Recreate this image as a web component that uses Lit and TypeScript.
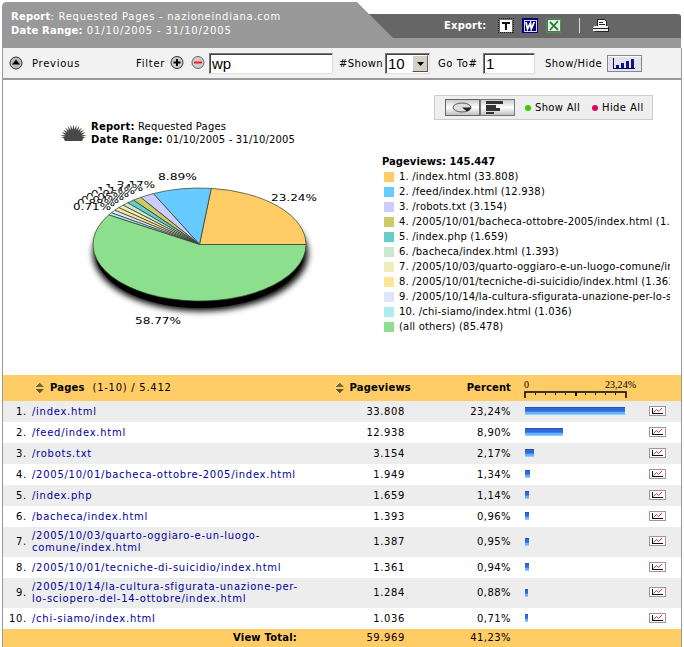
import { LitElement, html, svg, css } from "lit";
import { customElement } from "lit/decorators.js";

interface Row {
  label: string[];
  views: string;
  percent: string;
  bar: number;
  tall?: boolean;
}

const rows: Row[] = [
  { label: ["/index.html"], views: "33.808", percent: "23,24%", bar: 100 },
  { label: ["/feed/index.html"], views: "12.938", percent: "8,90%", bar: 38 },
  { label: ["/robots.txt"], views: "3.154", percent: "2,17%", bar: 9 },
  { label: ["/2005/10/01/bacheca-ottobre-2005/index.html"], views: "1.949", percent: "1,34%", bar: 5 },
  { label: ["/index.php"], views: "1.659", percent: "1,14%", bar: 4 },
  { label: ["/bacheca/index.html"], views: "1.393", percent: "0,96%", bar: 4 },
  { label: ["/2005/10/03/quarto-oggiaro-e-un-luogo-", "comune/index.html"], views: "1.387", percent: "0,95%", bar: 4, tall: true },
  { label: ["/2005/10/01/tecniche-di-suicidio/index.html"], views: "1.361", percent: "0,94%", bar: 4 },
  { label: ["/2005/10/14/la-cultura-sfigurata-unazione-per-", "lo-sciopero-del-14-ottobre/index.html"], views: "1.284", percent: "0,88%", bar: 3, tall: true },
  { label: ["/chi-siamo/index.html"], views: "1.036", percent: "0,71%", bar: 3 },
];

const legend: [string, string][] = [
  ["#ffcc66", "1. /index.html (33.808)"],
  ["#66ccff", "2. /feed/index.html (12.938)"],
  ["#ccccff", "3. /robots.txt (3.154)"],
  ["#cccc66", "4. /2005/10/01/bacheca-ottobre-2005/index.html (1.949)"],
  ["#66cccc", "5. /index.php (1.659)"],
  ["#cce8cc", "6. /bacheca/index.html (1.393)"],
  ["#eeeebb", "7. /2005/10/03/quarto-oggiaro-e-un-luogo-comune/index.html (1.387)"],
  ["#ffe699", "8. /2005/10/01/tecniche-di-suicidio/index.html (1.361)"],
  ["#dde6ff", "9. /2005/10/14/la-cultura-sfigurata-unazione-per-lo-sciopero (1.284)"],
  ["#aaeeee", "10. /chi-siamo/index.html (1.036)"],
  ["#8cdf8c", "(all others) (85.478)"],
];

const shares = [23.24, 8.89, 2.17, 1.34, 1.14, 0.96, 0.95, 0.94, 0.88, 0.71, 58.77];

/* Outer labels: text, left edge, baseline, width */
const pieLabels: [string, number, number, number][] = [
  ["2.17%", 117, 187.5, 38],
  ["1.34%", 105, 191, 38],
  ["1.14%", 97, 194, 38],
  ["0.96%", 91, 197, 38],
  ["0.95%", 86, 200, 38],
  ["0.94%", 81, 203, 38],
  ["0.88%", 77, 206, 38],
  ["0.71%", 73, 210, 38],
  ["8.89%", 158, 179.5, 39],
  ["23.24%", 271, 200.5, 46],
  ["58.77%", 135, 323.5, 46],
];

const CX = 199.5, CY = 244.5 - 80, RX = 106.5, RY = 56.5;

function slicePath(from: number, to: number): string {
  const a = from * 2 * Math.PI, b = to * 2 * Math.PI;
  const large = to - from > 0.5 ? 1 : 0;
  return `M${CX} ${CY}L${CX + RX * Math.cos(a)} ${CY - RY * Math.sin(a)}A${RX} ${RY} 0 ${large} 0 ${CX + RX * Math.cos(b)} ${CY - RY * Math.sin(b)}Z`;
}

@customElement("report-pie")
export class ReportPie extends LitElement {
  static styles = css`
    :host { display: block; }
    svg { display: block; }
    text { font: 8px "DejaVu Sans", Verdana, sans-serif; letter-spacing: 0; fill: #000; }
  `;
  render() {
    let at = 0;
    const slices = shares.map((s, i) => {
      const from = at;
      at += s / 99.99;
      return svg`<path d=${slicePath(from, at)} fill=${legend[i][0]} stroke="#333c33" stroke-width=".7"/>`;
    });
    const spikes = Array.from({ length: 15 }, (_, i) => {
      const a = Math.PI * (i / 14);
      const b = a + Math.PI / 28;
      const p = (r: number, t: number) =>
        `${(73.5 + r * Math.cos(t)).toFixed(1)},${(58 - r * Math.sin(t)).toFixed(1)}`;
      return i < 14 ? `${p(13.5, a)} ${p(8.5, b)}` : p(13.5, a);
    }).join(" ");
    return html`<svg width="350" height="260" viewBox="0 0 350 260">
      <defs><filter id="soft" x="-20%" y="-20%" width="140%" height="150%"><feGaussianBlur stdDeviation="3.2"/></filter></defs>
      <polygon points=${spikes} fill="#484848"/>
      <path d="M63 57h21l-2 4h-17z" fill="#484848"/>
      <ellipse cx=${CX + 1} cy=${CY + 9} rx=${RX + 1} ry=${RY + 1} filter="url(#soft)"/>
      <ellipse cx=${CX} cy=${CY + 7} rx=${RX - 2} ry=${RY}/>
      ${pieLabels.map(([t, x, y, w]) => svg`
        <rect x=${x - 1} y=${y - 86.5} width=${w - 2} height="7" fill="#fff"/>
        <text transform=${`translate(${x} ${y - 80})`} textLength=${w} lengthAdjust="spacingAndGlyphs">${t}</text>`)}
      ${slices}
    </svg>`;
  }
}

const sorter = html`<svg class="sorter" width="9" height="12" viewBox="0 0 9 12">
  <path d="M4.500 .5L9 5H0z" fill="#776633"/><path d="M4.500 11.500L0 7h9z" fill="#665522"/>
  <path d="M4.500 .5L0 5M0 7l4.500 4.500" stroke="#fff" stroke-width=".7" fill="none"/></svg>`;

const trend = html`<svg class="trend" width="17" height="10" viewBox="0 0 17 10" shape-rendering="crispEdges">
  <rect x=".5" y=".5" width="16" height="9" fill="#fff" stroke="#999"/>
  <path d="M3 2h1v5h10v1H3z" fill="#111"/>
  <path d="M4.500 6.500l3-3 2 2 3.500-3.500" fill="none" stroke="#d33" shape-rendering="auto" stroke-width="1"/></svg>`;

@customElement("app-root")
export class AppRoot extends LitElement {
  static styles = css`
    :host {
      display: block; box-sizing: border-box; width: 684px; height: 647px; overflow: hidden;
      padding: 2px 2px 0 2px; background: #fff; color: #000;
      font: 10px/12px "DejaVu Sans", Verdana, sans-serif; letter-spacing: .73px;
    }
    svg { display: block; flex: none; }
    .head { position: relative; height: 46px; color: #fff; }
    .shape { position: absolute; left: 0; top: 0; }
    .title { position: absolute; left: 9px; top: 8px; line-height: 14px; white-space: nowrap; }
    .title b, .export b { letter-spacing: .2px; }
    .title div + div { letter-spacing: .85px; }
    .export { position: absolute; left: 442px; top: 15px; display: flex; align-items: center; height: 18px; }
    .export b { width: 55px; }
    .export svg { margin-left: -1px; }
    .frame { width: 678px; border: 1px solid #999; border-width: 0 1px; height: 599px; }
    .tools { display: flex; align-items: center; height: 30px; background: #f2f2f2; border-bottom: 2px solid #999; white-space: nowrap; }
    .tools span { position: relative; top: 1px; }
    .field { box-sizing: border-box; height: 21px; border: 1px solid; border-color: #777 #ddd #ddd #777; box-shadow: inset 1px 1px #444;
      background: #fff; font: 15px/20px "Liberation Sans", Arial, sans-serif; letter-spacing: 0; padding-left: 2px; display: flex; }
    .drop { margin-left: auto; width: 14px; height: 15px; margin-top: 1px; margin-right: 1px; background: #d4d0c8; border: 1px solid; border-color: #fff #555 #555 #fff; }
    .chart { position: relative; height: 295px; }
    .chart report-pie { position: absolute; left: -3px; top: 0; }
    .caption { position: absolute; left: 88px; top: 40px; line-height: 13px; letter-spacing: .16px; white-space: nowrap; }
    .switch { position: absolute; left: 431px; top: 15px; width: 219px; height: 25px; box-sizing: border-box; border: 1px solid #ccc;
      background: #eee; display: flex; align-items: center; padding-left: 10px; white-space: nowrap; }
    .dot { width: 6px; height: 6px; border-radius: 50%; margin-right: 4px; }
    .green { background: #3c0; } .red { background: #d05; }
    .legend { position: absolute; left: 379px; top: 74px; width: 288px; overflow: hidden; letter-spacing: .18px; white-space: nowrap; }
    .legend b { display: block; height: 15px; line-height: 15px; letter-spacing: .03px; }
    .item { display: flex; align-items: center; height: 15px; }
    .swatch { width: 10px; height: 10px; margin: 0 5px 0 2px; flex: none; }
    .row { display: grid; grid-template-columns: 23px 5px 294px 80px 106px 14px 120px 1fr; height: 21px; align-items: center; }
    .row > * { grid-row: 1; }
    .row.tall { height: 30px; }
    .row:nth-child(even) { background: #ededed; }
    .row.headrow, .row.total { background: #fc6; }
    .headrow { height: 26px; } .total { height: 18px; }
    .num { grid-column: 1; text-align: right; margin-right: -1px; }
    .name { grid-column: 3; color: #0000a0; padding-left: 1px; white-space: nowrap; }
    .views { grid-column: 4; text-align: right; letter-spacing: .6px; }
    .pct { grid-column: 5; text-align: right; letter-spacing: .45px; }
    .barcell { grid-column: 7; }
    .spark { grid-column: 8; padding-left: 4px; margin-top: -2px; }
    .bar { height: 8px; background: linear-gradient(#2453b8 0 12%, #3268d8 13% 50%, #3a82f2 51% 65%, #69b0ff 66% 80%, #a7d8ff); margin-bottom: 1px; }
    .cell { display: flex; align-items: center; white-space: nowrap; }
    .headrow .name { color: #000; padding-left: 4px; gap: 6px; }
    b { letter-spacing: .2px; }
    .row .cell.views { grid-column: 3 / 5; justify-content: flex-end; margin-right: -6px; gap: 6px; letter-spacing: 0; }
    .headrow .pct { letter-spacing: .1px; }
    .total .name { color: #000; text-align: right; padding-right: 28px; }
    .scale { grid-column: 7; margin-top: 1px; margin-left: -2px; }
    .scale text { font: 10px "Liberation Serif", serif; letter-spacing: 0; }
    .sp { flex: none; }
  `;
  render() {
    return html`
      <div class="head">
        <svg class="shape" width="680" height="46" viewBox="0 0 680 46">
          <path d="M340 12H676q3 0 3 3V40H340z" fill="#666"/>
          <path d="M0 46V5q0-5 5-5H355L391 36H679V46z" fill="#999"/>
        </svg>
        <div class="title"><div><b>Report</b>: Requested Pages - nazioneindiana.com</div><div><b>Date Range:</b> 01/10/2005 - 31/10/2005</div></div>
        <div class="export"><b>Export:</b>
          <svg width="130" height="18" viewBox="0 0 130 18" shape-rendering="crispEdges">
            <rect x=".5" y="1.500" width="15" height="14" fill="none" stroke="#222" stroke-dasharray="1 1"/>
            <rect x="2" y="3" width="12" height="12" fill="#fff"/><path d="M4 5h8v2H9v6H7V7H4z" fill="#111"/>
            <rect x="24" y="1" width="16" height="15" fill="#000080"/><path d="M26.500 14V3.500H38v10.500z" fill="none" stroke="#dde"/>
            <path d="M28 5l1.500 7 3-6 .8 6 3-7" fill="none" stroke="#fff" stroke-width="1.800" shape-rendering="auto"/>
            <rect x="48.500" y="1.500" width="14" height="14" fill="none" stroke="#3c9a49" stroke-width="1.500"/><rect x="50" y="3" width="12" height="11" fill="#e5f3e5"/>
            <path d="M52 5l8 8M60 4l-8 9" stroke="#248536" stroke-width="1.800" shape-rendering="auto"/>
            <path d="M81.500 1v15" stroke="#ddd"/>
            <path d="M99.500 9V2.500h7l2 2V9z" fill="#fff" stroke="#222"/><path d="M101 5.500h4M101 7.500h6" stroke="#222"/>
            <path d="M95 10l2-1h12l2 1v4H95z" fill="#eee"/><path d="M95 11.500h15M97 14.500h13.500v-5" stroke="#222" fill="none"/>
          </svg>
        </div>
      </div>
      <div class="frame">
        <div class="tools">
          <svg width="14" height="14" viewBox="0 0 14 14" style="margin-left:6px"><circle cx="7" cy="7" r="6" fill="#bbb" stroke="#333"/><path d="M7 3.500L11 8.500H3z"/></svg>
          <span class="sp" style="margin-left:9px;width:104px">Previous</span><span class="sp" style="width:31px">Filter</span>
          <svg width="40" height="14" viewBox="0 0 40 14">
            <circle cx="10" cy="6.500" r="6" fill="#ccc" stroke="#333"/><path d="M10 3v7M6.500 6.500h7" stroke="#000" stroke-width="2"/>
            <circle cx="31" cy="6.500" r="6" fill="#ccc" stroke="#666"/><path d="M27 6.500h8" stroke="#e22" stroke-width="2"/></svg>
          <div class="field" style="width:124px;margin-left:2px">wp</div>
          <span class="sp" style="margin-left:6px;width:46px;letter-spacing:.4px">#Shown</span>
          <div class="field" style="width:45px">10<div class="drop"><svg width="14" height="15" viewBox="0 0 14 15"><path d="M4 6h7L7.500 10z"/></svg></div></div>
          <span class="sp" style="margin-left:8px;width:45px;letter-spacing:.6px">Go To#</span>
          <div class="field" style="width:52px">1</div>
          <span class="sp" style="margin-left:10px;width:62px;letter-spacing:.45px">Show/Hide</span>
          <svg width="35" height="17" viewBox="0 0 35 17" shape-rendering="crispEdges"><rect x=".5" y=".5" width="34" height="16" fill="#e4e4ee" stroke="#888"/><path d="M1 1.500h33" stroke="#fff"/>
            <path d="M6.500 3v10.500H28" fill="none" stroke="#006"/><path d="M9 10h3v3H9zM14 8h3v5h-3zM19 6h3v7h-3zM24 4h3v9h-3z" fill="#118"/></svg>
        </div>
        <div class="chart">
          <report-pie></report-pie>
          <div class="caption"><b>Report:</b> Requested Pages<br><b>Date Range:</b> 01/10/2005 - 31/10/2005</div>
          <div class="switch">
            <svg width="70" height="18" viewBox="0 0 70 18">
              <defs><linearGradient id="g" x2="0" y2="1"><stop offset="0" stop-color="#c8c8c8"/><stop offset=".5" stop-color="#fff"/><stop offset="1" stop-color="#bbb"/></linearGradient></defs>
              <rect x=".5" y=".5" width="34" height="16" fill="url(#g)" stroke="#666"/><rect x="35.500" y=".5" width="34" height="16" fill="url(#g)" stroke="#777"/>
              <ellipse cx="17" cy="8.500" rx="9" ry="4.500" fill="#ddd" stroke="#555"/><path d="M17 8.500h9q0 2-4 4z" fill="#222"/>
              <path d="M41 2h17v3H41zM41 6h10v3H41zM41 9h14v3H41zM41 13h8v2H41z" fill="#333"/></svg>
            <span class="dot green" style="margin-left:10px"></span><span class="sp" style="width:57px;letter-spacing:.3px">Show All</span>
            <span class="dot red"></span><span style="letter-spacing:.4px">Hide All</span>
          </div>
          <div class="legend"><b>Pageviews: 145.447</b>
            ${legend.map(([c, t]) => html`<div class="item"><span class="swatch" style="background:${c}"></span>${t}</div>`)}
          </div>
        </div>
        <div class="table">
          <div class="row headrow">
            <div class="name cell">${sorter}<span><b>Pages</b>&nbsp; (1-10) / 5.412</span></div>
            <div class="views cell">${sorter}<b>Pageviews</b></div>
            <b class="pct">Percent</b>
            <svg class="scale" width="115" height="22" viewBox="0 0 115 22">
              <text x="1" y="10" textLength="5">0</text><text x="82" y="10" textLength="31">23,24%</text>
              <path d="M2.500 20v-6h101v6" transform="translate(-.5 0)" fill="none" stroke="#000" stroke-width="1.500"/><path d="M53 14v4" stroke="#000" stroke-width="2"/>
              <path d="M12.500 15v2M22.500 15v2M32.500 15v2M42.500 15v2M62.500 15v2M72.500 15v2M82.500 15v2M92.500 15v2" stroke="#000"/></svg>
          </div>
          ${rows.map((r, i) => html`<div class="row ${r.tall ? "tall" : ""}">
            <span class="num">${i + 1}.</span>
            <span class="name">${r.label.map((l, k) => html`${k ? html`<br>` : ""}${l}`)}</span>
            <span class="views">${r.views}</span><span class="pct">${r.percent}</span>
            <div class="barcell"><div class="bar" style="width:${r.bar}px"></div></div>
            <div class="spark">${trend}</div>
          </div>`)}
          <div class="row total"><b class="name">View Total:</b><span class="views">59.969</span><span class="pct">41,23%</span></div>
        </div>
      </div>`;
  }
}
